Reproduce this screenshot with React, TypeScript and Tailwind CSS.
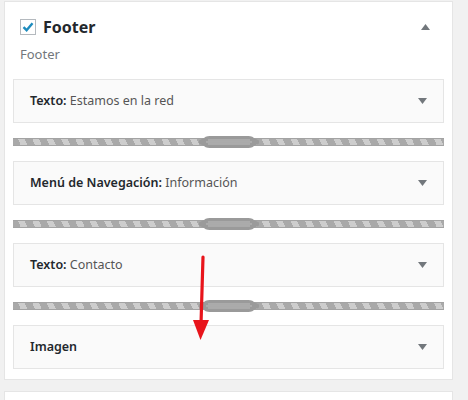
const rows = [
  { label: "Texto", value: "Estamos en la red" },
  { label: "Menú de Navegación", value: "Información" },
  { label: "Texto", value: "Contacto" },
  { label: "Imagen", value: "" },
];

function Rope() {
  return (
    <div className="relative flex h-[38px] items-center">
      <div className="h-[8px] w-full border-y border-[#a3a3a3] bg-[repeating-linear-gradient(65deg,#a9a9a9_0px,#a9a9a9_7px,#cdcdcd_7px,#cdcdcd_13px)]" />
      <svg
        className="absolute left-[186px] top-[12px]"
        width="60"
        height="14"
        viewBox="0 0 60 14"
      >
        <path
          d="M0 5.5 L5 3 C7 1 10 1 13 1 H47 C50 1 53 1 55 3 L60 5.5 V8.5 L55 11 C53 13 50 13 47 13 H13 C10 13 7 13 5 11 L0 8.5 Z"
          fill="#9a9a9a"
        />
        <path d="M9 5 H51 M7 7 H53 M9 9 H51" stroke="#c4c4c4" strokeWidth="0.8" />
      </svg>
    </div>
  );
}

function Row({ label, value }: { label: string; value: string }) {
  return (
    <div className="flex h-[44px] items-center justify-between border border-[#e5e5e5] bg-[#fafafa] pl-4 pr-4 text-[12.5px]">
      <span>
        <span className="font-semibold text-[#23282d]">
          {label}
          {value ? ":" : ""}
        </span>
        {value ? <span className="text-[#555]"> {value}</span> : null}
      </span>
      <svg width="9" height="6" viewBox="0 0 9 6">
        <path d="M0 0 H9 L4.5 6 Z" fill="#72777c" />
      </svg>
    </div>
  );
}

export default function App() {
  return (
    <div className="relative h-[400px] w-[468px] overflow-hidden bg-[#f1f1f1] pt-[1px] font-['Noto_Sans',sans-serif]">
      <div className="ml-[4px] w-[449px] border border-[#e5e5e5] bg-white px-2 pb-[10px]">
        <div className="h-[77px] pl-[7px] pt-[15px]">
          <div className="flex items-center justify-between pr-[14px]">
            <div className="flex items-center gap-[7px]">
              <span className="flex h-[16px] w-[16px] items-center justify-center border border-[#b4b9be] bg-white">
                <svg width="14" height="14" viewBox="0 0 14 14">
                  <path
                    d="M2.5 7.2 L5.6 10.2 L11.5 3.2"
                    stroke="#1e8cbe"
                    strokeWidth="2.4"
                    fill="none"
                  />
                </svg>
              </span>
              <span className="text-[16px] font-bold leading-5 text-[#23282d]">Footer</span>
            </div>
            <svg width="9" height="6" viewBox="0 0 9 6">
              <path d="M0 6 H9 L4.5 0 Z" fill="#72777c" />
            </svg>
          </div>
          <div className="mt-[8px] text-[13px] text-[#72777c]">Footer</div>
        </div>
        {rows.map((r, i) => (
          <div key={i}>
            {i > 0 ? <Rope /> : null}
            <Row label={r.label} value={r.value} />
          </div>
        ))}
      </div>
      <div className="ml-[4px] mt-[11px] h-[20px] w-[449px] border border-[#e5e5e5] bg-white" />
      <svg
        className="absolute left-[190px] top-[254px]"
        width="24"
        height="90"
        viewBox="0 0 24 90"
      >
        <path d="M13 3 L11 70" stroke="#e8141b" strokeWidth="3.2" strokeLinecap="round" />
        <path d="M3 66 L19 66 L10.5 86 Z" fill="#e8141b" />
      </svg>
    </div>
  );
}
